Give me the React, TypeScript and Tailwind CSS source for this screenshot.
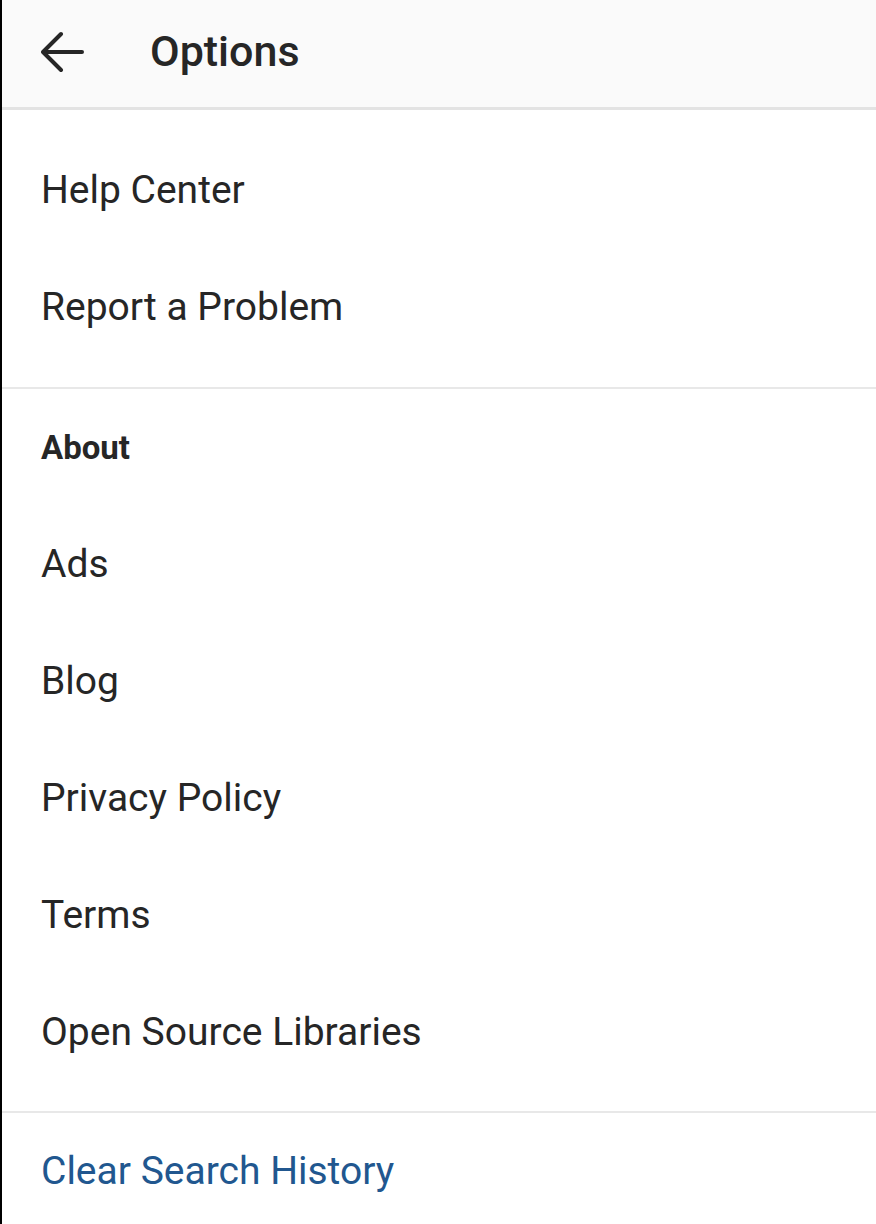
import React from "react";

const Row = ({ children, className = "" }: { children: React.ReactNode; className?: string }) => (
  <div className={`h-[117px] flex items-center pl-[39px] ${className}`}>{children}</div>
);

export default function App() {
  return (
    <div
      className="w-[876px] h-[1224px] overflow-hidden bg-white border-l-2 border-black text-[#262626]"
      style={{ fontFamily: "Roboto, 'Noto Sans', sans-serif" }}
    >
      <div className="h-[110px] bg-[#fafafa] flex items-center border-b-[3px] border-[#e3e3e3]">
        <div className="w-[148px] flex items-center pl-[39px] -mt-[3px]">
          <svg width="44" height="44" viewBox="0 0 44 44" fill="none" stroke="#262626" strokeWidth="4" strokeLinecap="round" strokeLinejoin="round">
            <path d="M41 22H3" />
            <path d="M20 4L2 22L20 40" />
          </svg>
        </div>
        <span className="text-[43px] font-medium leading-none text-[#262626] -mt-[5px]">Options</span>
      </div>
      <div className="pt-[22px] pb-[21px] border-b-2 border-[#e8e8e8]">
        <Row><span className="text-[39px] leading-none">Help Center</span></Row>
        <Row><span className="text-[39px] leading-none">Report a Problem</span></Row>
      </div>
      <div className="pb-[20px] border-b-2 border-[#e8e8e8]">
        <Row><span className="text-[33px] font-bold leading-none">About</span></Row>
        <Row><span className="text-[39px] leading-none">Ads</span></Row>
        <Row><span className="text-[39px] leading-none">Blog</span></Row>
        <Row><span className="text-[39px] leading-none">Privacy Policy</span></Row>
        <Row><span className="text-[39px] leading-none">Terms</span></Row>
        <Row><span className="text-[39px] leading-none">Open Source Libraries</span></Row>
      </div>
      <Row><span className="text-[39px] leading-none text-[#21578f]">Clear Search History</span></Row>
    </div>
  );
}
